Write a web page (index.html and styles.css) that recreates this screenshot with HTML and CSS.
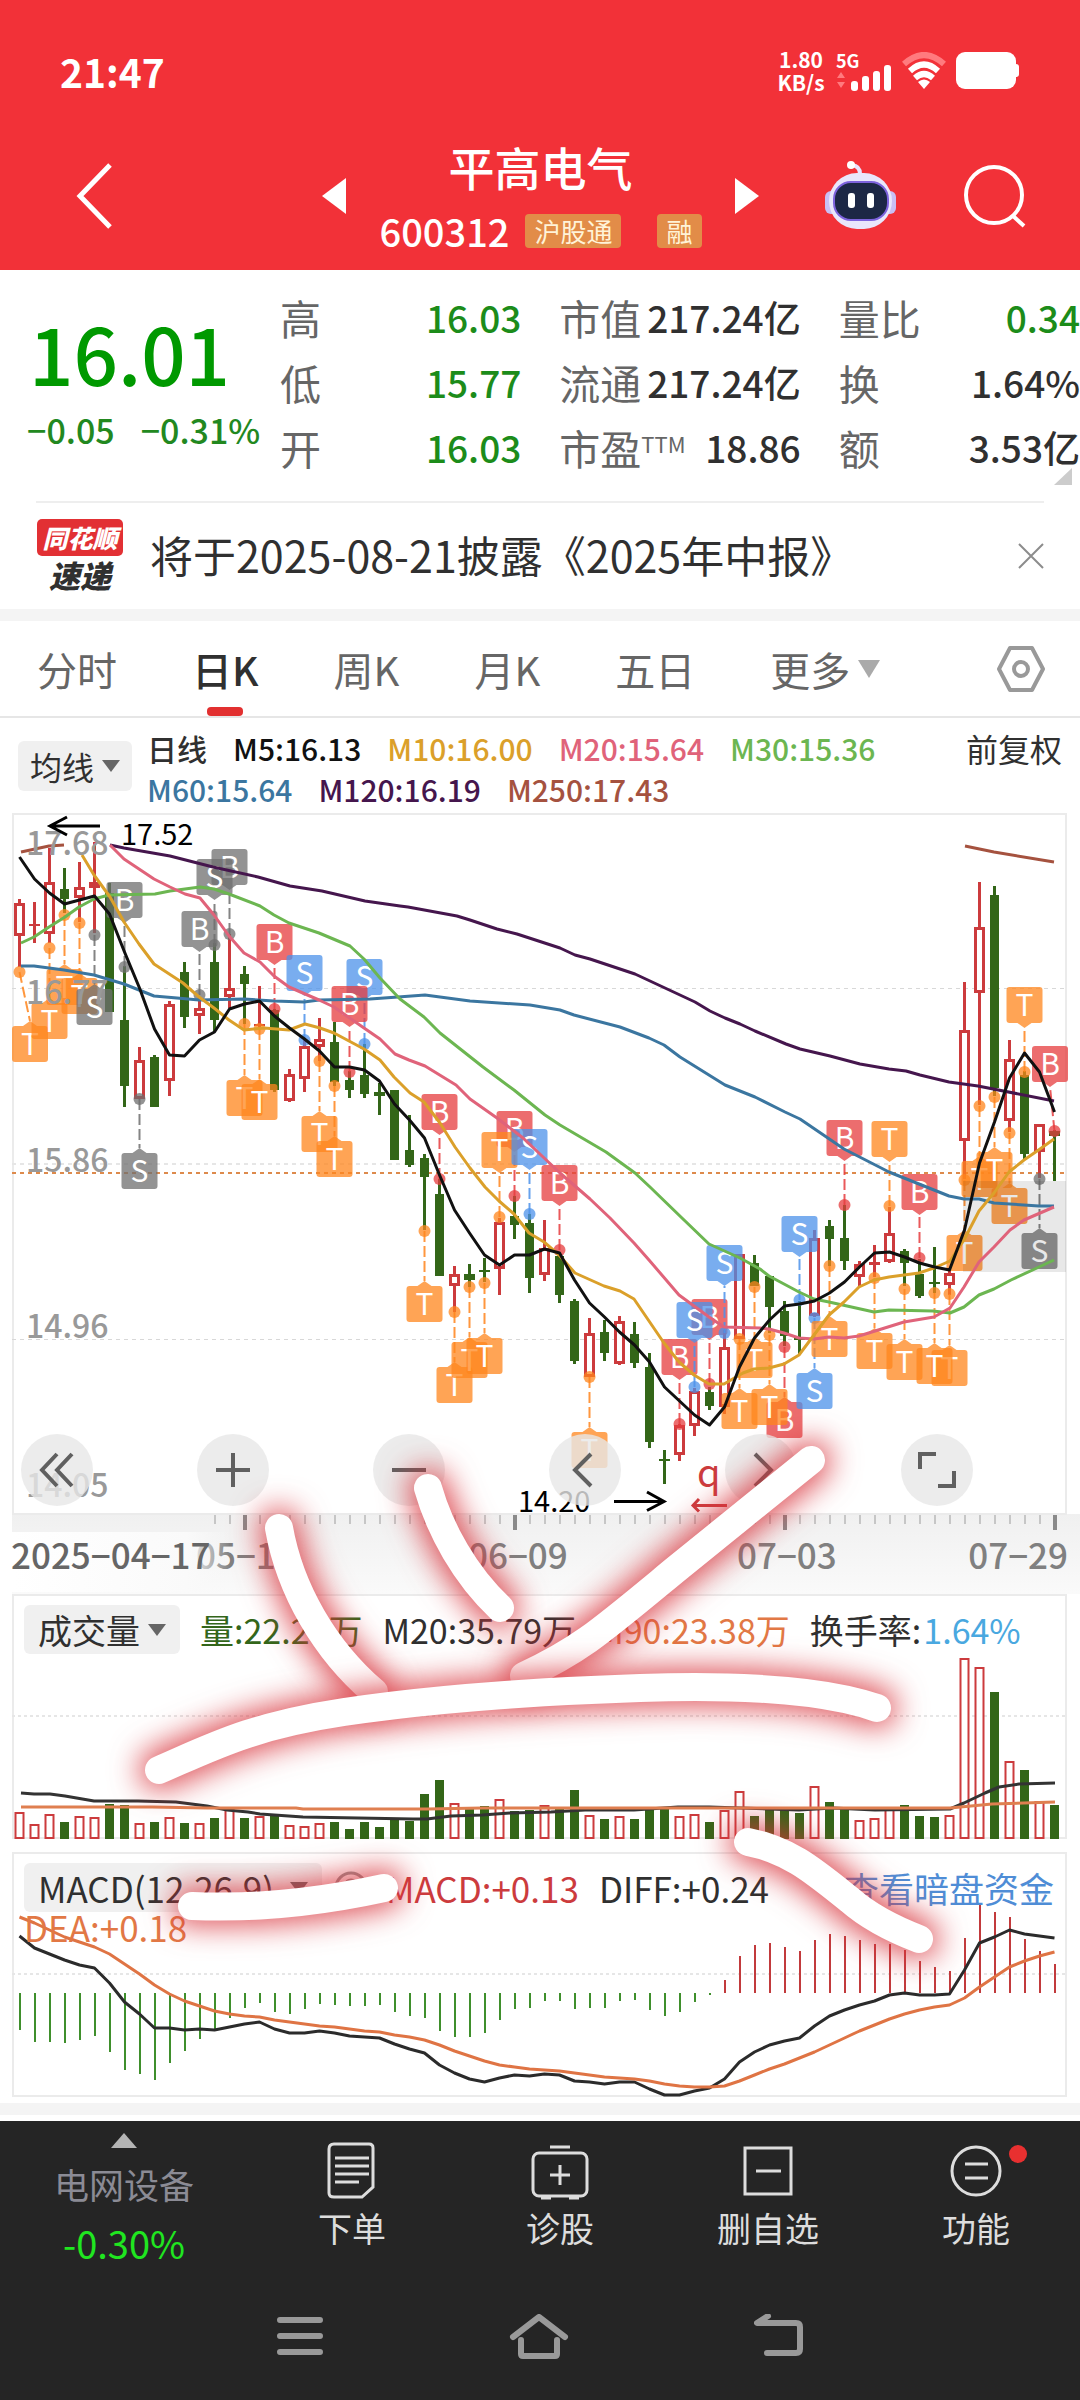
FILE: index.html
```html
<!DOCTYPE html>
<html lang="zh-CN">
<head>
<meta charset="utf-8">
<meta name="viewport" content="width=device-width, initial-scale=1">
<title>平高电气 600312</title>
<link rel="stylesheet" href="styles.css">
</head>
<body>
<header class="top">
  <div class="status">
    <span class="clock">21:47</span>
    <span class="speed">1.80<br>KB/s</span>
    <span class="net">5G
      <svg width="56" height="26" viewBox="0 0 56 26" aria-hidden="true"><path d="M1 13l4-6 4 6zM1 17l4 6 4-6z" fill="#ff7a7e"/><g fill="#fff"><rect x="15" y="16" width="7" height="10" rx="3"/><rect x="26" y="11" width="7" height="15" rx="3"/><rect x="37" y="6" width="7" height="20" rx="3"/><rect x="48" y="0" width="7" height="26" rx="3"/></g></svg>
    </span>
    <svg class="wifi" width="44" height="38" viewBox="0 0 44 38" fill="none" stroke-width="6" aria-hidden="true"><path d="M2 12Q22-6 42 12" stroke="#ff7a7e"/><path d="M8 19Q22 6 36 19M13 26Q22 18 31 26" stroke="#fff"/><path d="M22 37l-6-7q6-5 12 0z" fill="#fff"/></svg>
    <svg class="battery" width="64" height="38" viewBox="0 0 64 38" aria-hidden="true"><rect width="60" height="37" rx="9" fill="#fff"/><rect x="56" y="12" width="7" height="13" rx="3" fill="#fff"/></svg>
  </div>
  <div class="titlebar">
    <button class="icon" aria-label="返回"><svg width="44" height="72" viewBox="0 0 44 72"><path d="M38 5L8 36l30 31" fill="none" stroke="#fff" stroke-width="5"/></svg></button>
    <div class="stock">
      <button class="icon" aria-label="上一只"><svg width="24" height="36"><path d="M24 0v36L0 18z" fill="#fff"/></svg></button>
      <div class="names">
        <h1>平高电气</h1>
        <p class="code">600312 <span class="tag">沪股通</span><span class="tag">融</span></p>
      </div>
      <button class="icon" aria-label="下一只"><svg width="24" height="36"><path d="M0 0v36l24-18z" fill="#fff"/></svg></button>
    </div>
    <button class="icon" aria-label="智能助手"><svg width="74" height="72" viewBox="0 0 74 72">
      <path d="M36 14Q36 6 28 5" fill="none" stroke="#e9e4ff" stroke-width="4" stroke-linecap="round"/><circle cx="27" cy="5" r="4" fill="#fff"/>
      <rect x="1" y="31" width="14" height="23" rx="6" fill="#c9bff5"/><rect x="58" y="31" width="14" height="23" rx="6" fill="#c9bff5"/>
      <rect x="5" y="13" width="63" height="56" rx="28" fill="#e9e6fb"/><rect x="10" y="22" width="54" height="38" rx="17" fill="#1c2745" stroke="#7d62dc" stroke-width="2"/>
      <rect x="24" y="33" width="7" height="15" rx="3" fill="#fff"/><rect x="43" y="33" width="7" height="15" rx="3" fill="#fff"/></svg></button>
    <button class="icon" aria-label="搜索"><svg width="62" height="64" viewBox="0 0 62 64" fill="none" stroke="#fff" stroke-width="4"><circle cx="30" cy="31" r="28"/><path d="M48 51l12 11"/></svg></button>
  </div>
</header>

<main>
<section class="quote">
  <div class="price">
    <strong>16.01</strong>
    <p><span>−0.05</span><span>−0.31%</span></p>
  </div>
  <dl>
    <div><dt>高</dt><dd class="down">16.03</dd></div>
    <div><dt>市值</dt><dd>217.24亿</dd></div>
    <div><dt>量比</dt><dd class="down">0.34</dd></div>
    <div><dt>低</dt><dd class="down">15.77</dd></div>
    <div><dt>流通</dt><dd>217.24亿</dd></div>
    <div><dt>换</dt><dd>1.64%</dd></div>
    <div><dt>开</dt><dd class="down">16.03</dd></div>
    <div><dt>市盈<sup>TTM</sup></dt><dd>18.86</dd></div>
    <div><dt>额</dt><dd>3.53亿</dd></div>
  </dl>
  <i class="corner"></i>
</section>
<section class="notice">
  <span class="brand"><b>同花顺</b><em>速递</em></span>
  <a href="#report">将于2025-08-21披露《2025年中报》</a>
  <button class="icon" aria-label="关闭"><svg width="26" height="26"><path d="M1 1l24 24M25 1L1 25" stroke="#8c8c8c" stroke-width="2"/></svg></button>
</section>

<nav class="tabs">
  <button>分时</button>
  <button class="on">日K</button>
  <button>周K</button>
  <button>月K</button>
  <button>五日</button>
  <button>更多<i class="tri"></i></button>
  <button class="gear" aria-label="设置"><svg width="50" height="48" viewBox="0 0 50 48" fill="none" stroke="#999" stroke-width="4"><path d="M14 3h22l11 21-11 21H14L3 24z" stroke-linejoin="round"/><circle cx="25" cy="24" r="7"/></svg></button>
</nav>

<section class="legend">
  <button class="pill">均线<i class="tri"></i></button>
  <p class="ma"><span>日线</span><span class="m5">M5:16.13</span><span class="m10">M10:16.00</span><span class="m20">M20:15.64</span><span class="m30">M30:15.36</span><span class="m60">M60:15.64</span><span class="m120">M120:16.19</span><span class="m250">M250:17.43</span></p>
  <button class="adjust">前复权</button>
</section>

<div class="charts">
  <div class="kline">
    <svg id="kline" viewBox="0 812 1080 782" role="img" aria-label="日K线图"></svg>
    <div class="tools">
      <button aria-label="展开"><svg width="36" height="36"><path d="M18 2L3 18l15 16M33 2L18 18l15 16"/></svg></button>
      <button aria-label="放大"><svg width="36" height="36"><path d="M18 1v34M1 18h34"/></svg></button>
      <button aria-label="缩小"><svg width="36" height="36"><path d="M1 18h34"/></svg></button>
      <button aria-label="左移"><svg width="36" height="36"><path d="M24 2L8 18l16 16"/></svg></button>
      <button aria-label="右移"><svg width="36" height="36"><path d="M12 2l16 16-16 16"/></svg></button>
      <button aria-label="全屏"><svg width="38" height="38"><path d="M2 18V3h16M36 20v15H20"/></svg></button>
    </div>
  </div>
  <div class="panel">
    <svg id="volume" viewBox="0 1594 1080 258" role="img" aria-label="成交量图"></svg>
    <p class="info"><button class="pill">成交量<i class="tri"></i></button><span class="vol">量:22.24万</span><span>M20:35.79万</span><span class="dea">M90:23.38万</span><span>换手率:<span class="rate">1.64%</span></span></p>
  </div>
  <div class="panel">
    <svg id="macd" viewBox="0 1852 1080 246" role="img" aria-label="MACD图"></svg>
    <p class="info macd"><button class="pill">MACD(12,26,9)<i class="tri"></i></button><svg class="help" width="34" height="34" fill="none" stroke="#999" stroke-width="3"><circle cx="17" cy="17" r="15"/><path d="M12 14q0-5 5-5t5 5q0 3-5 5v3M17 24v3"/></svg><span class="red">MACD:+0.13</span><span>DIFF:+0.24</span><a href="#funds">查看暗盘资金</a></p>
    <p class="info second"><span class="dea">DEA:+0.18</span></p>
  </div>
  <svg class="ink" viewBox="0 812 1080 1286" aria-hidden="true">
    <defs><filter id="glow" filterUnits="userSpaceOnUse" x="0" y="1300" width="1080" height="800" color-interpolation-filters="sRGB"><feMorphology in="SourceAlpha" operator="dilate" radius="5"/><feGaussianBlur stdDeviation="15" result="b"/><feFlood flood-color="#d9343c" flood-opacity=".85"/><feComposite in2="b" operator="in" result="s"/><feMerge><feMergeNode in="s"/><feMergeNode in="SourceGraphic"/></feMerge></filter></defs>
    <g fill="none" stroke="#fff" stroke-width="28" stroke-linecap="round">
      <path filter="url(#glow)" d="M279 1528C290 1590 325 1650 374 1692"/>
      <path filter="url(#glow)" d="M428 1488C440 1530 465 1575 500 1608"/>
      <path filter="url(#glow)" d="M811 1460L675 1570C600 1632 580 1650 524 1676"/>
      <path filter="url(#glow)" d="M159 1770C210 1748 250 1726 344 1712S550 1691 640 1688S820 1688 877 1708"/>
      <path filter="url(#glow)" d="M192 1906C260 1909 320 1902 384 1888"/>
      <path filter="url(#glow)" d="M748 1842C790 1850 815 1872 850 1900Q875 1922 919 1939"/>
    </g>
  </svg>
</div>
</main>

<footer>
  <nav class="actions">
    <a class="sector" href="#sector"><i></i><span>电网设备</span><b>-0.30%</b></a>
    <button><svg width="56" height="60" viewBox="0 0 56 60"><path d="M10 3h35q4 0 4 4v39l-11 10H10q-5 0-5-4V8q0-5 5-5z"/><path d="M11 17h34M11 25h34M11 33h34M11 41h24"/></svg>下单</button>
    <button><svg width="60" height="60" viewBox="0 0 60 60"><rect x="3" y="12" width="54" height="43" rx="6"/><path d="M20 6h20M30 24v20M20 34h20M11 57h10M39 57h10"/></svg>诊股</button>
    <button><svg width="56" height="60" viewBox="0 0 56 60"><path d="M5 7h46v46H5zM16 30h25"/></svg>删自选</button>
    <button class="dot"><svg width="56" height="60" viewBox="0 0 56 60"><circle cx="28" cy="30" r="24"/><path d="M17 23h23M17 37h23"/></svg>功能</button>
  </nav>
  <nav class="system">
    <button class="icon" aria-label="最近任务"><svg width="48" height="46"><path d="M4 6h40M4 22h40M4 38h40"/></svg></button>
    <button class="icon" aria-label="主页"><svg width="60" height="46"><path d="M4 23L30 3l26 20M12 26v14q0 2 2 2h32q2 0 2-2V26"/></svg></button>
    <button class="icon" aria-label="返回"><svg width="50" height="46"><path d="M14 2L3 9h39q4 0 4 4v22q0 4-4 4H13"/></svg></button>
  </nav>
</footer>
<script src="charts.js"></script>
</body>
</html>
```
FILE: styles.css
```css
* { box-sizing: border-box; }
body { margin: 0; background: #fff; color: #303030; font-family: "Noto Sans CJK SC", "Noto Sans", sans-serif; font-size: 34px; }
h1, p, dl, dd { margin: 0; }
button { margin: 0; padding: 0; border: 0; background: none; color: inherit; font: inherit; white-space: nowrap; }
a { color: inherit; text-decoration: none; }
svg { display: block; }
.icon { flex: none; }

.top { height: 270px; background: #f23138; color: #fff; }
.status { display: flex; align-items: center; height: 142px; padding: 0 60px; }
.clock { flex: 1; font-size: 39px; font-weight: 700; }
.speed { width: 50px; font-size: 21px; line-height: 23px; font-weight: 700; text-align: center; }
.net { width: 56px; margin-left: 10px; font-size: 18px; line-height: 18px; font-weight: 700; }
.net svg { margin-top: -4px; }
.wifi { margin: 0 10px; }
.titlebar { display: flex; align-items: center; height: 108px; padding: 0 54px 0 72px; }
.stock { flex: 1; display: flex; justify-content: center; align-items: center; gap: 27px; padding: 0 65px 0 206px; }
.stock + .icon { margin-right: 66px; }
.names { flex: 1; padding-top: 8px; text-align: center; }
h1 { font-size: 46px; line-height: 62px; font-weight: 500; }
.code { display: flex; align-items: center; justify-content: center; font-size: 38px; line-height: 68px; font-weight: 500; white-space: nowrap; }
.tag { margin-left: 16px; padding: 0 9px; border-radius: 4px; background: #e28c48; color: #fff3d8; font-size: 26px; line-height: 34px; font-weight: 400; }
.tag + .tag { margin-left: 36px; }

.quote { position: relative; display: flex; padding: 14px 0 22px 27px; }
.price { width: 253px; color: #090; }
.price strong { display: block; padding: 0 0 0 2px; font-size: 78px; line-height: 136px; font-weight: 500; }
.price p { display: flex; gap: 26px; color: #22881f; font-size: 34px; line-height: 20px; font-weight: 500; white-space: nowrap; }
.quote dl { flex: 1; display: grid; grid-template-columns: repeat(3, 1fr); column-gap: 38px; }
.quote dl div { display: flex; justify-content: space-between; align-items: center; height: 65px; white-space: nowrap; }
dt { color: #666; font-size: 41px; line-height: 64px; }
dt sup { font-size: 22px; line-height: 22px; vertical-align: 12px; }
dd { font-size: 37px; font-weight: 500; }
.down { color: #1c8c1a; }
.corner { position: absolute; right: 8px; bottom: 16px; border-left: 18px solid transparent; border-bottom: 17px solid #ccc; }

.notice { display: flex; align-items: center; height: 108px; margin: 0 36px; border-top: 2px solid #eee; }
.brand { display: flex; flex-direction: column; align-items: center; width: 88px; margin-right: 26px; font-style: italic; font-weight: 900; }
.brand b { width: 86px; border-radius: 5px; background: #e23034; color: #fff; font-size: 25px; line-height: 37px; text-align: center; }
.brand em { font-size: 31px; line-height: 38px; }
.notice a { flex: 1; font-size: 43px; line-height: 60px; padding-bottom: 4px; white-space: nowrap; }

.tabs { display: flex; align-items: center; height: 109px; padding: 0 34px 0 37px; border-top: 12px solid #f4f4f4; border-bottom: 2px solid #e6e6e6; color: #666; font-size: 40px; }
.tabs button { display: flex; align-items: center; align-self: stretch; margin-right: 75px; }
.tabs .on { position: relative; color: #303030; font-weight: 500; }
.tabs .on::after { content: ""; position: absolute; bottom: 0; left: 50%; width: 36px; height: 9px; margin-left: -18px; border-radius: 4px; background: #e23030; }
.tabs .gear { margin: 0 0 0 auto; }
.tri { width: 0; border: 9px solid transparent; border-top: 12px solid #666; border-bottom: 0; }
.tabs .tri { margin-left: 8px; border-width: 18px 11px 0; border-top-color: #aaa; }

.legend { display: flex; align-items: flex-start; height: 94px; padding: 10px 18px; font-size: 32px; }
.pill { display: inline-flex; align-items: center; justify-content: space-between; flex: none; border-radius: 6px; background: #f0f0f0; }
.legend .pill { width: 114px; height: 50px; margin-top: 13px; padding: 0 12px; }
.ma { flex: 1; display: flex; flex-wrap: wrap; column-gap: 26px; margin-left: 15px; font-size: 30px; line-height: 41px; font-weight: 500; }
.adjust { line-height: 41px; }
.m5 { color: #111; } .m10 { color: #dba02a; } .m20 { color: #e0637a; } .m30 { color: #6cb651; }
.m60 { color: #3b76a0; } .m120 { color: #45164d; } .m250 { color: #a5523f; }

.charts, .kline, .panel { position: relative; }
.charts { border-bottom: 5px solid #fff; }
.charts > div > svg, .ink { width: 100%; height: auto; }
.ink { position: absolute; top: 0; left: 0; pointer-events: none; }
.tools { position: absolute; left: 21px; bottom: 88px; display: flex; gap: 104px; }
.tools button { display: grid; place-items: center; width: 72px; height: 72px; border-radius: 50%; background: rgba(231, 231, 231, .8); }
.tools path { fill: none; stroke: #606060; stroke-width: 4; }
.info { position: absolute; top: 11px; left: 24px; right: 24px; display: flex; align-items: center; gap: 20px; height: 49px; white-space: nowrap; }
.info .pill { align-self: stretch; padding: 0 14px; gap: 8px; }
.info.macd { gap: 20px; right: 26px; font-size: 35px; }
.info.macd .pill { gap: 16px; }
.info .help { margin: 0 -2px 0 -8px; }
.info.macd a { margin-left: auto; color: #4f8dd6; }
.info.second { top: 50px; font-size: 35px; }
.vol { color: #33661a; } .dea { color: #e27845; } .rate { margin-left: 2px; color: #49a8e0; } .red { color: #cc3b3d; }

text { font-family: "Noto Sans CJK SC", sans-serif; }
.axis { fill: #999; font-size: 32px; font-weight: 500; }
.date { fill: #808080; font-size: 35px; font-weight: 500; }
.mark { fill: #fff; font-size: 30px; text-anchor: middle; }
.peak { fill: #000; font-size: 29px; }

footer { border-top: 12px solid #f4f4f4; background: #252525; color: #ddd; }
.actions { display: grid; grid-template-columns: 248fr 208fr 208fr 208fr 208fr; height: 185px; border-top: 6px solid #fff; line-height: 46px; }
.actions > * { display: flex; flex-direction: column; align-items: center; }
.actions button { position: relative; padding-top: 20px; }
.actions svg { flex: none; margin-bottom: 4px; fill: none; stroke: #ddd; stroke-width: 3; }
.dot::after { content: ""; position: absolute; top: 24px; left: 50%; width: 18px; height: 18px; margin-left: 33px; border-radius: 50%; background: #e83030; }
.sector { padding-top: 12px; color: #8b8b95; font-size: 35px; }
.sector i { border: 13px solid transparent; border-bottom: 15px solid #b5b5b5; border-top: 0; }
.sector span { margin-top: 13px; }
.sector b { margin-top: 13px; color: #20e620; font-size: 38px; font-weight: 400; }
.system { display: flex; justify-content: center; gap: 185px; padding: 14px 0 42px; }
.system svg { fill: none; stroke: #999; stroke-width: 6; stroke-linecap: round; stroke-linejoin: round; }
```
FILE: charts.js
```js
const RED = '#cc3b3d', GREEN = '#336618';
const X = i => 19.5 + 15 * i;
const line = (pts, color, w = 3) => `<polyline points="${pts}" fill="none" stroke="${color}" stroke-width="${w}" stroke-linejoin="round"/>`;
const series = ys => ys.map((y, i) => X(i) + ',' + y).join(' ');
const rect = (x, y, w, h, fill, extra = '') => `<rect x="${x}" y="${y}" width="${w}" height="${h}" fill="${fill}" ${extra}/>`;
const frame = (y, h) => rect(13, y, 1053, h, 'none', 'stroke="#ebebeb" stroke-width="2"');
const text = (cls, x, y, s, extra = '') => `<text class="${cls}" x="${x}" y="${y}" ${extra}>${s}</text>`;
const dash = (y, c, d, w = 1) => `<path d="M12 ${y}H1066" stroke="${c}" stroke-dasharray="${d}" stroke-width="${w}"/>`;

// high, body top, body bottom, low, rising (1) or falling (0)
const candles = [
[899,903,936,967,1],[902,924,926,943,1],[848,882,934,943,1],[868,889,899,913,0],[862,887,898,922,1],[842,882,888,933,1],[883,893,1012,1012,0],[966,1020,1086,1107,0],[1047,1060,1099,1099,1],[1055,1057,1107,1107,0],
[1001,1004,1081,1096,1],[962,972,1017,1028,0],[997,1008,1016,1034,1],[943,962,1020,1032,0],[934,988,997,1008,1],[966,974,984,1024,0],[986,1024,1026,1027,1],[1009,1010,1090,1092,0],[1069,1074,1101,1102,1],[1040,1046,1079,1092,1],
[1018,1039,1047,1061,1],[1022,1042,1082,1086,0],[1071,1080,1090,1098,0],[1044,1075,1094,1098,0],[1083,1092,1096,1115,0],[1090,1090,1160,1160,0],[1115,1150,1165,1167,0],[1154,1158,1177,1230,0],[1179,1194,1276,1276,0],[1266,1274,1286,1312,1],
[1264,1274,1280,1287,0],[1258,1270,1272,1282,0],[1218,1222,1269,1295,1],[1196,1216,1225,1239,0],[1214,1223,1278,1293,0],[1220,1248,1275,1281,1],[1253,1256,1295,1303,0],[1299,1301,1361,1364,0],[1318,1333,1377,1377,1],[1320,1332,1353,1361,0],
[1316,1321,1364,1365,1],[1322,1334,1363,1368,0],[1353,1367,1442,1448,0],[1450,1459,1461,1484,0],[1424,1425,1455,1461,1],[1388,1391,1426,1436,1],[1387,1392,1406,1410,0],[1330,1347,1407,1414,1],[1254,1254,1339,1339,1],[1255,1263,1286,1286,0],
[1276,1276,1307,1333,0],[1301,1311,1336,1346,0],[1301,1338,1340,1354,0],[1230,1238,1316,1317,1],[1220,1226,1239,1266,0],[1205,1238,1261,1270,0],[1261,1264,1277,1286,1],[1245,1262,1265,1277,1],[1207,1233,1262,1263,1],[1249,1251,1263,1286,0],
[1259,1274,1296,1298,0],[1247,1282,1284,1293,0],[1271,1273,1285,1295,1],[982,1030,1141,1179,1],[882,927,993,1105,1],[886,895,1088,1096,0],[1040,1059,1121,1132,1],[1071,1075,1154,1160,0],[1124,1124,1152,1178,1],[1130,1131,1136,1181,0]];

// letter, colour, candle index, dot y, box top, box centre when pushed off the candle
const O = '#ff851c', B = '#e63c3e', S = '#4c92ea', G = '#6f6f6f';
const marks = [
['T',O,0,972,1026,30],['T',O,2,948,1003],['T',O,3,915,969],['T',O,4,923,978],['S',G,5,935,989],['B',G,7,967,882],['S',G,8,1099,1153],['B',G,12,995,911],['B',G,14,934,849],['S',G,13,945,859],
['T',O,15,1024,1080],['T',O,16,1029,1084],['B',B,17,1009,924],['S',S,19,1040,955],['T',O,20,1061,1116],['T',O,21,1086,1141],['S',S,23,1044,959],['B',B,22,1072,986],['B',B,28,1179,1094],['T',O,27,1231,1286],
['B',B,33,1196,1111],['T',O,32,1217,1132],['S',S,34,1214,1129],['B',B,36,1250,1165],['T',O,29,1312,1367],['T',O,30,1287,1342],['T',O,31,1283,1338],['T',O,38,1377,1432],['B',B,44,1424,1339],['B',B,46,1384,1299],['S',S,45,1387,1302],
['S',S,47,1333,1245],['T',O,48,1339,1393],['T',O,49,1287,1342],['B',B,51,1347,1402],['T',O,50,1335,1389],['S',S,52,1300,1216],['S',S,53,1318,1373],['T',O,54,1266,1321],['T',O,57,1278,1333],['T',O,59,1289,1344],['T',O,62,1294,1350],['T',O,61,1293,1348],
['B',B,55,1205,1120],['T',O,58,1206,1121],['B',B,60,1258,1174],['T',O,63,1180,1235],['T',O,64,1106,1161],['T',O,65,1097,1152],['T',O,66,1133,1188],['T',O,67,1072,987],['B',B,69,1131,1046,1050],['S',G,68,1179,1233]];

const m5 = [857,879,893,904,900,896,914,952,988,1029,1055,1056,1040,1032,1009,1004,1001,1016,1028,1039,1051,1067,1067,1070,1081,1104,1120,1138,1175,1210,1233,1255,1265,1255,1255,1249,1253,1280,1303,1317,1332,1345,1362,1387,1401,1415,1425,1407,1367,1338,1320,1306,1304,1301,1293,1282,1267,1253,1252,1257,1263,1267,1270,1230,1163,1122,1078,1053,1072,1112];
const averages = [
['#dba02a','82,855 94,875 110,897 124,922 139,944 154,964 183,983 199,997 214,1008 229,1020 244,1030 264,1028 289,1030 305,1024 320,1028 334,1033 364,1049 380,1060 394,1077 410,1093 424,1102 440,1123 455,1147 470,1168 485,1187 499,1201 514,1214 529,1233 544,1242 559,1255 575,1273 604,1286 620,1291 634,1299 649,1321 664,1343 679,1362 694,1375 709,1384 724,1384 743,1373 754,1369 769,1368 784,1364 799,1355 814,1335 829,1315 844,1302 859,1287 874,1280 889,1277 919,1273 934,1268 950,1261 964,1240 979,1211 994,1193 1009,1172 1024,1160 1040,1149 1054,1139'],
['#e0637a','110,845 124,859 139,869 154,879 170,887 185,894 200,898 214,915 229,936 244,953 260,962 274,976 289,987 319,1000 334,1007 364,1028 380,1039 395,1054 409,1060 425,1066 456,1085 470,1099 497,1118 523,1138 560,1173 590,1199 610,1218 634,1243 649,1260 679,1295 694,1306 709,1317 724,1327 760,1328 769,1329 784,1333 799,1338 814,1339 829,1337 844,1338 859,1336 904,1322 934,1317 950,1308 964,1287 979,1262 994,1247 1010,1230 1024,1220 1054,1207'],
['#6cb651','21,943 34,937 49,927 65,917 79,907 94,899 109,895 155,894 170,891 200,887 214,889 229,894 260,906 274,915 289,923 319,933 350,946 364,959 380,978 400,999 424,1017 440,1033 483,1067 514,1090 545,1115 560,1125 606,1152 635,1173 650,1187 683,1219 709,1244 740,1258 760,1269 769,1276 799,1292 814,1299 829,1302 874,1312 889,1310 933,1311 950,1313 964,1307 979,1295 994,1289 1011,1280 1039,1267 1054,1260'],
['#3b76a0','21,966 34,966 64,970 94,975 124,984 154,996 177,998 199,1000 244,999 274,1001 304,1002 319,1000 370,999 398,997 425,995 470,1001 530,1005 560,1010 574,1015 620,1027 649,1038 664,1045 680,1057 725,1085 755,1097 785,1112 800,1119 844,1149 889,1172 949,1196 964,1199 979,1199 994,1203 1039,1206 1054,1206'],
['#45164d','110,845 124,848 170,856 213,867 258,877 290,886 322,891 365,901 400,906 408,907 457,916 470,920 497,929 517,934 560,948 575,955 590,959 635,974 695,1002 710,1011 725,1018 740,1024 755,1031 786,1044 800,1049 830,1056 860,1064 889,1069 906,1071 920,1075 949,1082 978,1086 1054,1101'],
['#a5523f','21,852 49,846 64,845'],['#a5523f','965,846 994,852 1054,862']];

let k = '<defs><linearGradient id="strip" x1="0" y1="0" x2="0" y2="1"><stop stop-color="#f0f0f0"/><stop offset="1" stop-color="#fafafa"/></linearGradient><linearGradient id="fade"><stop stop-color="#fff"/><stop offset=".8" stop-color="#fafafa"/><stop offset="1" stop-color="#f8f8f8" stop-opacity="0"/></linearGradient></defs>';
k += rect(12, 1514, 1068, 80, 'url(#strip)') + frame(814, 700);
k += dash(988.5, '#d8d8d8', '4 4') + dash(1164, '#e6e6e6', '4 4', 2) + dash(1339.5, '#d8d8d8', '4 4') + dash(1173, '#dd8a4c', '4 4', 2);
candles.forEach(([h, t, b, l, up], i) => {
  const x = X(i), c = up ? RED : GREEN;
  k += `<path d="M${x} ${h}V${t}M${x} ${b}V${l}" stroke="${c}" stroke-width="3"/>`;
  if (b - t < 7) k += rect(x - 5.5, t, 11, Math.max(2, b - t), c);
  else k += up ? rect(x - 4, t + 1.5, 8, b - t - 3, '#fff', `stroke="${c}" stroke-width="3"`) : rect(x - 4.5, t, 9, b - t, c);
});
marks.forEach(([s, c, i, dot, top, cx]) => {
  const x = X(i), bx = cx || x, below = top > dot;
  const edge = below ? top : top + 36, tip = below ? top - 5 : top + 41;
  k += `<path d="M${x} ${dot}L${bx} ${tip}" stroke="${c}" stroke-opacity=".85" stroke-width="2" stroke-dasharray="11 4"/>`;
  k += `<g fill="${c}" fill-opacity=".75"><circle cx="${x}" cy="${dot}" r="6"/>${rect(bx - 18, top, 36, 36, c, 'rx="3"')}<path d="M${bx - 7} ${edge}L${bx} ${tip}L${bx + 7} ${edge}z"/></g>`;
  k += text('mark', bx, top + 29, s);
});
k += rect(963, 1181, 103, 91, '#000', 'fill-opacity=".09"');
averages.slice().reverse().forEach(([c, p]) => k += line(p, c));
k += line(series(m5), '#111');
[['17.68',855],['16.77',1004],['15.86',1172],['14.96',1338],['14.05',1497]].forEach(([s, y]) => k += text('axis', 26, y, s));
k += text('peak', 121, 845, '17.52') + text('peak', 518, 1512, '14.20') + text('peak', 697, 1487, 'q', 'style="fill:#cc3b3d;font-size:38px"');
k += '<g fill="none" stroke="#000" stroke-width="3"><path d="M100 826H50M67 817L50 826l17 9M614 1501.500H664M647 1492l17 9.500-17 9"/><path d="M727 1505.500H693M699 1499l-6 6.500 6 6" stroke="#cc3b3d"/></g>';
for (let i = 13; i < 70; i++) {
  const major = i % 18 === 15;
  k += rect(X(i) - (major ? 1.5 : .5), 1515, major ? 4 : 2, major ? 15 : 9, major ? '#8a8a8a' : '#c6c6c6');
}
k += text('date', 196, 1569, '05−14') + rect(12, 1532, 218, 60, 'url(#fade)');
k += text('date', 11, 1569, '2025−04−17', 'style="fill:#666"') + text('date', 468, 1569, '06−09') + text('date', 737, 1569, '07−03') + text('date', 1068, 1569, '07−29', 'text-anchor="end"');
document.getElementById('kline').innerHTML = k;

const volumes = [725,763,731,756,737,740,703,706,758,756,740,760,758,744,710,744,737,738,764,767,758,756,777,756,771,750,753,672,630,698,716,708,686,724,720,706,716,660,734,747,738,747,716,716,737,731,756,720,662,738,720,720,728,647,697,710,750,743,712,706,738,741,734,263,290,366,572,600,692,706];
let v = frame(1595, 243) + dash(1716, '#e6e6e6', '3 3', 2);
volumes.forEach((z, i) => {
  const t = Math.round(1570 + z / 3), x = X(i);
  v += candles[i][4] ? rect(x - 4, t + 1, 8, 1837 - t, '#fff', `stroke="${RED}" stroke-width="2"`) : rect(x - 4.5, t, 9, 1839 - t, GREEN);
});
v += line('21,1793 34,1794 50,1794 65,1796 94,1801 138,1801 176,1802 207,1806 227,1810 248,1812 260,1814 303,1817 413,1819 427,1819 451,1816 482,1815 510,1813 551,1812 585,1810 634,1810 678,1807 709,1807 799,1810 833,1808 875,1810 950,1809 964,1803 985,1793 999,1787 1019,1784 1055,1783', '#333');
v += line('21,1807 152,1807 207,1808 296,1808 303,1809 427,1809 482,1808 950,1808 992,1804 1055,1802', '#df7f50');
document.getElementById('volume').innerHTML = v;

const hist = [570,605,605,608,600,588,635,690,702,719,670,633,597,568,535,503,489,516,522,508,492,496,498,498,495,515,528,533,573,591,592,579,540,507,503,483,484,507,503,503,483,481,510,528,516,486,464,419,347,316,309,321,333,299,282,288,299,311,312,330,363,382,393,294,195,216,231,296,333,371];
const diff = [288,323,342,360,375,383,430,485,522,563,564,570,567,570,561,552,546,567,579,579,573,580,587,590,594,611,626,638,675,700,717,726,714,706,708,702,705,722,726,732,726,726,747,765,765,753,744,716,666,635,614,603,594,557,527,510,496,484,465,459,464,464,461,390,309,290,269,281,288,294];
const dea = [231,250,271,290,305,320,342,371,402,434,461,483,498,514,522,527,531,539,545,551,557,561,567,572,576,584,592,601,614,632,648,662,674,680,686,689,692,698,704,710,713,717,723,731,737,740,741,738,723,705,687,671,654,636,615,594,573,555,537,522,509,500,494,474,441,410,382,362,347,336];
const my = z => Math.round(1840 + z / 3);
let m = frame(1853, 243) + dash(1974, '#e6e6e6', '3 3', 2);
hist.forEach((z, i) => m += `<path d="M${X(i) + .5} 1993V${my(z)}" stroke="${z > 458 ? '#3f8f2c' : '#c23a3c'}" stroke-width="2"/>`);
m += line(series(diff.map(my)), '#2b2b2b') + line(series(dea.map(my)), '#df7444');
document.getElementById('macd').innerHTML = m;
```
